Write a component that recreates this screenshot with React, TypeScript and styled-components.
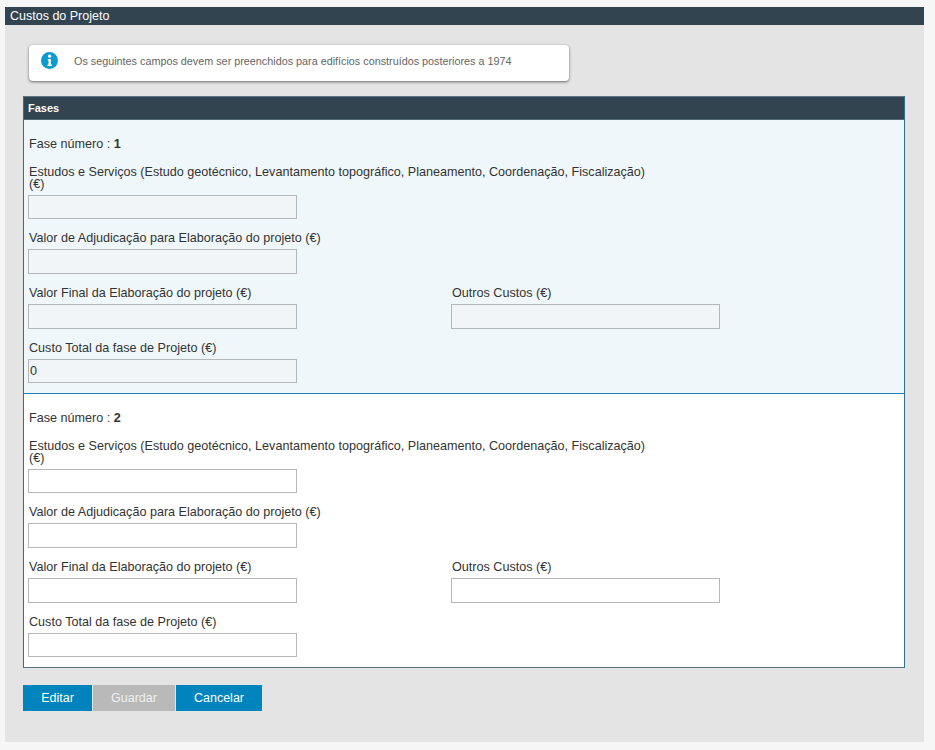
import React from "react";
import styled, { createGlobalStyle } from "styled-components";

const Global = createGlobalStyle`
  html, body { margin: 0; padding: 0; background: #f6f6f6; }
  body { font-family: "Liberation Sans", Arial, sans-serif; font-size: 12.6px; color: #333; }
  * { box-sizing: border-box; }
`;
const Page = styled.div`
  width: 935px;
  height: 750px;
  padding: 7px 11px 8px 5px;
  display: flex;
  flex-direction: column;
`;
const Title = styled.h1`
  margin: 0;
  height: 18px;
  padding-left: 5px;
  background: #31444f;
  color: #fff;
  font-size: 12.5px;
  font-weight: 400;
  line-height: 18px;
`;
const Panel = styled.div`
  flex: 1;
  background: #e4e4e4;
  padding: 20px 19px 0 18px;
`;
const Alert = styled.div`
  width: 540px;
  height: 36px;
  margin-left: 6px;
  background: #fff;
  border-radius: 4px;
  box-shadow: 0 1px 3px rgba(0, 0, 0, 0.55);
  display: flex;
  align-items: flex-start;
  padding: 7px 0 0 12px;
  gap: 16px;
  color: #666;
  font-size: 10.8px;
  svg { display: block; }
`;
const AlertText = styled.span`
  line-height: 13px;
  margin-top: 3px;
`;
const Fieldset = styled.section`
  margin-top: 15px;
  border: 1px solid #2f6f8f;
  border-top-color: #5b7283;
  border-bottom-color: #5b7283;
  background: #fff;
`;
const Legend = styled.h2`
  margin: 0;
  height: 23px;
  padding-left: 4px;
  background: #31444f;
  border-bottom: 1px solid #4f6675;
  color: #fff;
  font-size: 11px;
  font-weight: 700;
  line-height: 23px;
`;
const Phase = styled.div<{ $shaded?: boolean }>`
  height: ${(p) => (p.$shaded ? 274 : 273)}px;
  padding: 18px 0 0 4px;
  background: ${(p) => (p.$shaded ? "#f0f7fa" : "#fff")};
  border-bottom: ${(p) => (p.$shaded ? "1px solid #1a7fb5" : "0")};
`;
const PhaseNumber = styled.div`
  line-height: 13px;
  margin-bottom: 14.7px;
  padding-left: 1px;
  strong { font-weight: 700; }
`;
const Row = styled.div`
  display: grid;
  grid-template-columns: 423px 269px;
  margin-bottom: 13.17px;
`;
const Field = styled.div`
  display: flex;
  flex-direction: column;
`;
const Wide = styled(Field)`
  grid-column: 1 / -1;
`;
const Label = styled.label`
  display: block;
  max-width: 625px;
  padding-left: 1px;
  margin-bottom: 5px;
  line-height: 12px;
  color: #333;
`;
const Input = styled.input`
  width: 269px;
  height: 24.5px;
  padding: 0 1px;
  border: 1px solid #b4b8bb;
  border-radius: 0;
  background: ${(p) => (p.disabled ? "#f1f5f7" : "#fff")};
  color: #333;
  font: 12.6px "Liberation Sans", Arial, sans-serif;
  outline: none;
  &:disabled { opacity: 1; color: #333; }
`;
const Actions = styled.div`
  display: flex;
  gap: 1px;
  margin-top: 17px;
`;
const Button = styled.button<{ $w: number }>`
  width: ${(p) => p.$w}px;
  height: 26px;
  border: 0;
  padding: 0;
  background: ${(p) => (p.disabled ? "#b9b9b9" : "#0084bd")};
  color: ${(p) => (p.disabled ? "#f0f0f0" : "#fff")};
  font: 12.5px "Liberation Sans", Arial, sans-serif;
`;

function PhaseBlock({ n, disabled, total }: { n: number; disabled?: boolean; total?: string }) {
  return (
    <Phase $shaded={disabled}>
      <PhaseNumber>
        Fase número : <strong>{n}</strong>
      </PhaseNumber>
      <Row>
        <Wide>
          <Label>Estudos e Serviços (Estudo geotécnico, Levantamento topográfico, Planeamento, Coordenação, Fiscalização) (€)</Label>
          <Input disabled={disabled} readOnly />
        </Wide>
      </Row>
      <Row>
        <Wide>
          <Label>Valor de Adjudicação para Elaboração do projeto (€)</Label>
          <Input disabled={disabled} readOnly />
        </Wide>
      </Row>
      <Row>
        <Field>
          <Label>Valor Final da Elaboração do projeto (€)</Label>
          <Input disabled={disabled} readOnly />
        </Field>
        <Field>
          <Label>Outros Custos (€)</Label>
          <Input disabled={disabled} readOnly />
        </Field>
      </Row>
      <Row>
        <Wide>
          <Label>Custo Total da fase de Projeto (€)</Label>
          <Input disabled={disabled} readOnly value={total ?? ""} />
        </Wide>
      </Row>
    </Phase>
  );
}

export default function App() {
  return (
    <Page>
      <Global />
      <Title>Custos do Projeto</Title>
      <Panel>
        <Alert>
          <svg width="17" height="17" viewBox="0 0 17 17" aria-hidden="true">
            <circle cx="8.5" cy="8.5" r="8.5" fill="#0b9ad0" />
            <circle cx="8.6" cy="4.2" r="1.6" fill="#fff" />
            <path d="M6.8 7h3.1v5.6h1v1.4H6.5v-1.4h1V8.4h-.7z" fill="#fff" />
          </svg>
          <AlertText>Os seguintes campos devem ser preenchidos para edifícios construídos posteriores a 1974</AlertText>
        </Alert>
        <Fieldset>
          <Legend>Fases</Legend>
          <PhaseBlock n={1} disabled total="0" />
          <PhaseBlock n={2} />
        </Fieldset>
        <Actions>
          <Button $w={69}>Editar</Button>
          <Button $w={82} disabled>Guardar</Button>
          <Button $w={86}>Cancelar</Button>
        </Actions>
      </Panel>
    </Page>
  );
}
